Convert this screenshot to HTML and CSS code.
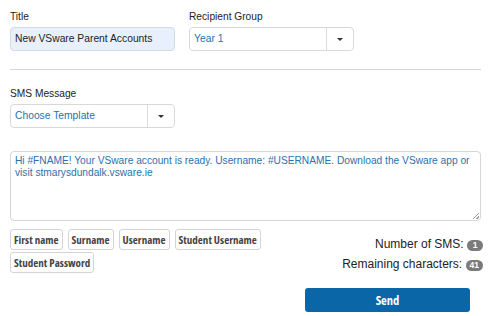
FILE: index.html
```html
<!DOCTYPE html>
<html lang="en">
<head>
  <meta charset="UTF-8" />
  <meta name="viewport" content="width=device-width, initial-scale=1.0"/>
  <title>New SMS</title>
  <link rel="stylesheet" href="styles.css">
</head>
<body>
  <div class="row">
    <div class="field">
      <label class="label">Title</label>
      <div class="input filled">New VSware Parent Accounts</div>
    </div>
    <div class="field">
      <label class="label">Recipient Group</label>
      <div class="select">
        <span class="select-value">Year 1</span>
        <span class="select-toggle"><span class="caret"></span></span>
      </div>
    </div>
  </div>

  <hr class="divider">

  <div class="field">
    <label class="label">SMS Message</label>
    <div class="select">
      <span class="select-value">Choose Template</span>
      <span class="select-toggle"><span class="caret"></span></span>
    </div>
  </div>

  <div class="message">Hi #FNAME! Your VSware account is ready. Username: #USERNAME. Download the VSware app or visit stmarysdundalk.vsware.ie<span class="grip"></span></div>

  <div class="bottom">
    <div class="tags">
      <button class="tag">First name</button>
      <button class="tag">Surname</button>
      <button class="tag">Username</button>
      <button class="tag">Student Username</button>
      <button class="tag">Student Password</button>
    </div>
    <div class="stats">
      <div class="stat">Number of SMS: <span class="badge">1</span></div>
      <div class="stat">Remaining characters: <span class="badge">41</span></div>
    </div>
  </div>

  <div class="actions">
    <button class="send">Send</button>
  </div>
</body>
</html>
```

FILE: styles.css
```css
body {
  margin: 0;
  padding: 9px 8px 0 10px;
  font-family: 'Liberation Sans', Arial, sans-serif;
  color: #222;
  background: #fff;
}

.row {
  display: flex;
  gap: 14px;
}

.field {
  width: 165px;
}

.label {
  display: block;
  font-size: 10.2px;
  line-height: 16px;
  margin-bottom: 2px;
}

.input {
  height: 22px;
  border: 1px solid #d3dae3;
  border-radius: 4px;
  padding: 0 4px;
  font-size: 10.3px;
  line-height: 22px;
  color: #222;
}

.input.filled {
  background-color: #e8f0fe;
}

.select {
  display: flex;
  height: 22px;
  border: 1px solid #d8d8d8;
  border-radius: 4px;
  font-size: 10.3px;
  line-height: 22px;
  color: #2a72ad;
}

.select-value {
  flex: 1;
  padding: 0 4px;
}

.select-toggle {
  width: 26px;
  border-left: 1px solid #dcdcdc;
  display: flex;
  align-items: center;
  justify-content: center;
}

.caret {
  width: 0;
  height: 0;
  border-left: 3px solid transparent;
  border-right: 3px solid transparent;
  border-top: 3px solid #333;
}

.divider {
  border: 0;
  height: 1px;
  background: #d6d6d6;
  margin: 18px 0 16px 0;
}

.message {
  position: relative;
  height: 62px;
  margin-top: 23px;
  border: 1px solid #d6d6d6;
  border-radius: 4px;
  padding: 3px 4px;
  font-size: 10.2px;
  line-height: 12px;
  color: #2a72ad;
}

.grip {
  position: absolute;
  right: 1px;
  bottom: 1px;
  width: 6px;
  height: 6px;
  background: linear-gradient(135deg, transparent 45%, #999 45%, #999 55%, transparent 55%, transparent 75%, #999 75%, #999 85%, transparent 85%);
}

.bottom {
  display: flex;
  justify-content: space-between;
  margin-top: 8px;
}

.tags {
  width: 262px;
  display: flex;
  flex-wrap: wrap;
  gap: 1px 5px;
}

.tag {
  height: 21px;
  padding: 0 3px;
  border: 1px solid #d4d4d4;
  border-radius: 3px;
  background: #fff;
  font-family: 'Open Sans', 'Noto Sans', sans-serif;
  font-stretch: 75%;
  font-weight: bold;
  font-size: 11px;
  color: #444;
}

.stats {
  margin-right: -2px;
  text-align: right;
  padding-top: 5px;
}

.stat {
  font-size: 12px;
  line-height: 20px;
  color: #222;
}

.badge {
  display: inline-block;
  min-width: 8px;
  padding: 0 4px;
  border-radius: 6px;
  background: #7b7b7b;
  color: #fff;
  font-size: 8.5px;
  font-weight: bold;
  line-height: 11px;
  text-align: center;
}

.actions {
  display: flex;
  justify-content: flex-end;
  margin-top: 14px;
  padding-right: 11px;
}

.send {
  width: 165px;
  height: 24px;
  border: 0;
  border-radius: 3px;
  background: #0b66a8;
  color: #fff;
  font-family: 'Open Sans', 'Noto Sans', sans-serif;
  font-stretch: 75%;
  font-weight: bold;
  font-size: 12.5px;
}
```
